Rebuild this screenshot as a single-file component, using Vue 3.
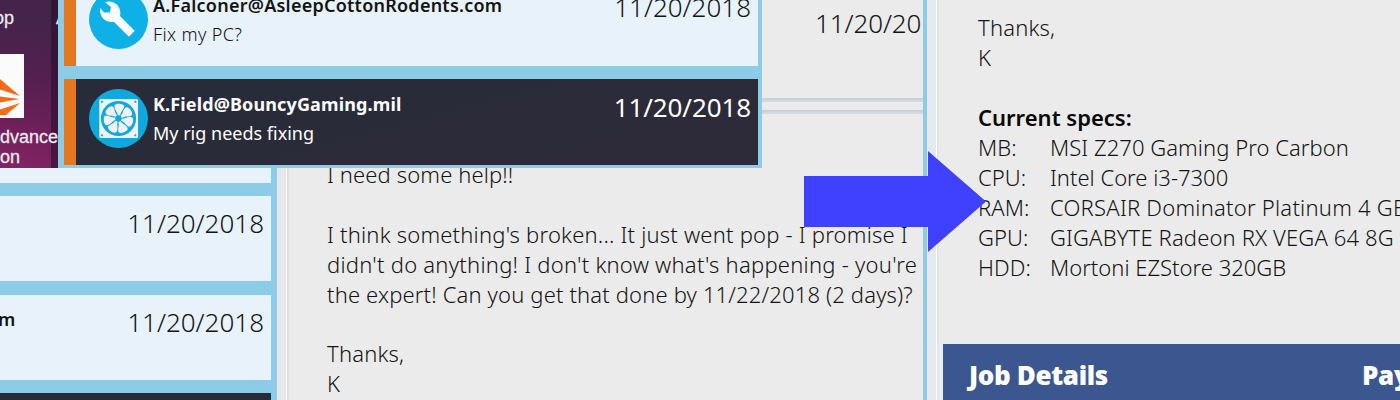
<script setup>
const popupRows = [
  { from: 'A.Falconer@AsleepCottonRodents.com', subject: 'Fix my PC?', date: '11/20/2018', icon: 'wrench', selected: false },
  { from: 'K.Field@BouncyGaming.mil', subject: 'My rig needs fixing', date: '11/20/2018', icon: 'fan', selected: true },
]
const inboxRows = [
  { tail: '', date: '' },
  { tail: '', date: '11/20/2018' },
  { tail: 'm', date: '11/20/2018' },
]
const bodyLines = [
  { text: 'I need some help!!', cls: 'l1' },
  { text: '', cls: '' },
  { text: "I think something's broken... It just went pop - I promise I", cls: 'l2' },
  { text: "didn't do anything! I don't know what's happening - you're", cls: 'l3' },
  { text: 'the expert! Can you get that done by 11/22/2018 (2 days)?', cls: 'l4' },
  { text: '', cls: '' },
  { text: 'Thanks,', cls: 'l5' },
  { text: 'K', cls: 'l5' },
]
const specs = [
  ['MB:', 'MSI Z270 Gaming Pro Carbon'],
  ['CPU:', 'Intel Core i3-7300'],
  ['RAM:', 'CORSAIR Dominator Platinum 4 GB'],
  ['GPU:', 'GIGABYTE Radeon RX VEGA 64 8G'],
  ['HDD:', 'Mortoni EZStore 320GB'],
]
const blades = [0, 1, 2, 3, 4, 5, 6].map((n) => (n * 360) / 7)
</script>

<template>
  <div class="screen">
    <aside class="inbox">
      <div v-for="(row, i) in inboxRows" :key="i" class="mail">
        <b class="tail">{{ row.tail }}</b>
        <span class="date">{{ row.date }}</span>
      </div>
      <div class="mail dark"></div>
    </aside>

    <main class="reader">
      <header class="reader-head"><span class="date">11/20/20</span></header>
      <div class="rule"></div>
      <div class="rule second"></div>
      <div class="message">
        <p v-for="(line, i) in bodyLines" :key="i"><span :class="line.cls">{{ line.text }}</span></p>
      </div>
    </main>

    <section class="details">
      <div class="specs">
        <p class="thanks">Thanks,</p>
        <p>K</p>
        <p></p>
        <p class="heading">Current specs:</p>
        <p v-for="([key, value], i) in specs" :key="key" class="spec">
          <span class="key">{{ key }}</span><span :class="'value v' + i">{{ value }}</span>
        </p>
      </div>
      <footer class="job"><b>Job Details</b><b class="pay">Pay</b></footer>
    </section>

    <div class="desktop">
      <div class="labels"><span>op</span><span class="next">A</span></div>
      <svg class="app" width="24" height="64" viewBox="0 0 24 64">
        <rect width="24" height="64" fill="#fbfbfc" />
        <g fill="#fb6a16">
          <path d="M0 25 20 42 0 35.500ZM0 42.500 19.500 45 0 48.500ZM20 49 6 61H0V55.500Z" />
        </g>
      </svg>
      <span class="name">dvance</span>
      <span class="name on">on</span>
    </div>

    <div class="popup">
      <div v-for="row in popupRows" :key="row.from" class="card" :class="{ selected: row.selected }">
        <svg class="avatar" width="59" height="59" viewBox="0 0 59 59">
          <circle cx="29.500" cy="29.500" r="29.500" :fill="row.selected ? '#10a9de' : '#0fb0e6'" />
          <path v-if="row.icon === 'wrench'" fill="#fbfdfe"
            d="M16.200 12.300C23.500 9.600 31.500 15 31.400 23.500L31 26 45.700 40.700 40 46.700 24.800 31.800C17 33.500 9.700 26.500 11.200 18L15 22.600 20.800 22.400 22 16.900Z" />
          <g v-else>
            <rect x="10.300" y="10" width="38.700" height="39" rx="1.500" fill="#f0f1f2" />
            <circle cx="29.500" cy="29.500" r="17.600" fill="#10a9de" />
            <g fill="#f0f1f2">
              <path v-for="angle in blades" :key="angle" :transform="`rotate(${angle} 29.500 29.500)`"
                d="M29 26.200C28.200 22.500 24.800 20.200 25.600 16.400 26 14.800 28.500 14.500 30.500 14.700 33.500 15 35.500 16.300 35.300 17.800 34.900 20.500 31.700 22 31.200 26.500Z" />
              <circle cx="29.500" cy="29.500" r="2.700" fill="#10a9de" />
            </g>
            <g fill="#10a9de">
              <circle cx="13" cy="12.800" r="1.100" /><circle cx="46.300" cy="12.800" r="1.100" />
              <circle cx="13" cy="46.300" r="1.100" /><circle cx="46.300" cy="46.300" r="1.100" />
            </g>
          </g>
        </svg>
        <div class="who">
          <b>{{ row.from }}</b>
          <span>{{ row.subject }}</span>
        </div>
        <span class="date">{{ row.date }}</span>
      </div>
    </div>

    <svg class="arrow" width="184" height="104" viewBox="0 0 184 104">
      <path d="M1 26H125V1L183 51.500 125 102V77H1Z" fill="#4040ff" />
    </svg>
  </div>
</template>

<style>
html, body { margin: 0; overflow: hidden; }
</style>

<style scoped>
.screen {
  position: relative;
  display: flex;
  width: 1400px;
  height: 400px;
  overflow: hidden;
  background: #ebebeb;
  color: #141414;
  font-family: "Noto Sans", sans-serif;
  font-weight: 300;
}
p { margin: 0; height: 30px; white-space: pre; }
.date { font-size: 26px; line-height: 36px; white-space: nowrap; }

.inbox {
  box-sizing: border-box;
  flex: none;
  display: flex;
  flex-direction: column;
  gap: 13px;
  width: 277px;
  padding-top: 98px;
  padding-right: 6px;
  background: #8ccce7;
}
.mail {
  box-sizing: border-box;
  flex: none;
  display: flex;
  justify-content: space-between;
  height: 85px;
  padding: 9px 7px 0 0;
  background: #e7f2fb;
}
.mail:nth-child(3) { margin-top: 1px; }
.mail.dark { background: #282a39; }
.tail { margin: 2px 0 0 -2px; font-size: 18px; line-height: 26px; font-weight: 600; }

.reader {
  box-sizing: border-box;
  flex: none;
  width: 650px;
  border-right: 4px solid #8ccce7;
  background: linear-gradient(90deg, #e5e9ee 9px, #fff 9px 10px, #e0e2e4 10px 12px, #ebebeb 12px);
  overflow: hidden;
}
.reader-head { box-sizing: border-box; display: flex; height: 98px; padding: 5px 0 0 538px; }
.reader-head .date { letter-spacing: -0.100px; }
.rule { height: 4px; margin-left: 12px; background: linear-gradient(#c5ccd5, #d7dce1); }
.rule.second { margin-top: 8px; }
.message { padding: 46px 0 0 50px; font-size: 22px; }
.message p { height: 29.900px; line-height: 29.900px; }
.l1 { letter-spacing: 0.130px; }
.l2 { letter-spacing: 0.210px; }
.l3 { letter-spacing: 0.250px; }
.l4 { letter-spacing: 0.150px; }
.l5, .thanks { letter-spacing: 0.200px; }

.details {
  flex: 1;
  display: flex;
  flex-direction: column;
  min-width: 0;
  overflow: hidden;
  background: linear-gradient(90deg, #e5e9f0 9px, #fff 9px 10px, #dfe1e3 10px 11px, #ebebeb 12px);
}
.specs { height: 332px; padding: 12px 0 0 51px; font-size: 22px; line-height: 30px; }
.heading { font-weight: 600; color: #080808; }
.spec { display: flex; }
.key { flex: none; width: 72px; letter-spacing: 0.100px; }
.v0 { letter-spacing: 0.050px; }
.v2 { letter-spacing: 0.230px; }
.v3 { letter-spacing: 0.140px; }
.job {
  flex: none;
  display: flex;
  height: 56px;
  margin-left: 16px;
  padding-left: 26px;
  background: #3c568f;
  color: #fff;
  font-size: 26px;
  line-height: 62px;
  font-weight: 700;
  letter-spacing: -0.350px;
  white-space: nowrap;
}
.job b { flex: none; width: 393px; }

.desktop {
  position: absolute;
  left: 0;
  top: 0;
  width: 58px;
  height: 168px;
  overflow: hidden;
  background:
    linear-gradient(90deg, transparent 51px, rgba(35, 12, 42, 0.550) 51px),
    linear-gradient(12deg, #842465 0%, #6c2059 28%, #54204f 55%, #44244a 85%);
  color: #eee9ee;
  font-family: "Liberation Sans", sans-serif;
  font-size: 18px;
  font-weight: 400;
  -webkit-text-stroke: 0.300px #eee9ee;
}
.labels { display: flex; height: 54px; line-height: 37px; margin-left: -6px; }
.next { margin-left: 42px; }
.app { display: block; }
.name { display: block; height: 21px; line-height: 38px; }
.on { line-height: 37px; }

.popup {
  position: absolute;
  left: 58px;
  top: 0;
  box-sizing: border-box;
  display: flex;
  flex-direction: column;
  justify-content: flex-end;
  gap: 13px;
  width: 704px;
  height: 168px;
  padding: 0 4px 3px 6px;
  overflow: hidden;
  background: #8ccce7;
}
.card {
  box-sizing: border-box;
  flex: none;
  display: flex;
  height: 86px;
  padding: 10px 7px 0 13px;
  border-left: 12px solid #e5781f;
  background: #e7f2fb;
}
.card.selected { background: linear-gradient(165deg, #282b39 20%, #2d2b39 80%); color: #fff; font-weight: 400; }
.avatar { flex: none; }
.who { display: flex; flex-direction: column; margin: 1px 0 0 5px; flex: 1; font-size: 18px; line-height: 29px; }
.who b { font-weight: 600; letter-spacing: 0.240px; }
.who span { letter-spacing: 0.350px; }
.selected .who b { font-weight: 700; letter-spacing: 0.130px; }
.selected .who span { letter-spacing: 0; }
.card .date { margin-top: -1px; }
.card.selected .date { margin-top: 0; letter-spacing: -0.100px; }

.arrow { position: absolute; left: 803px; top: 150px; }
</style>
